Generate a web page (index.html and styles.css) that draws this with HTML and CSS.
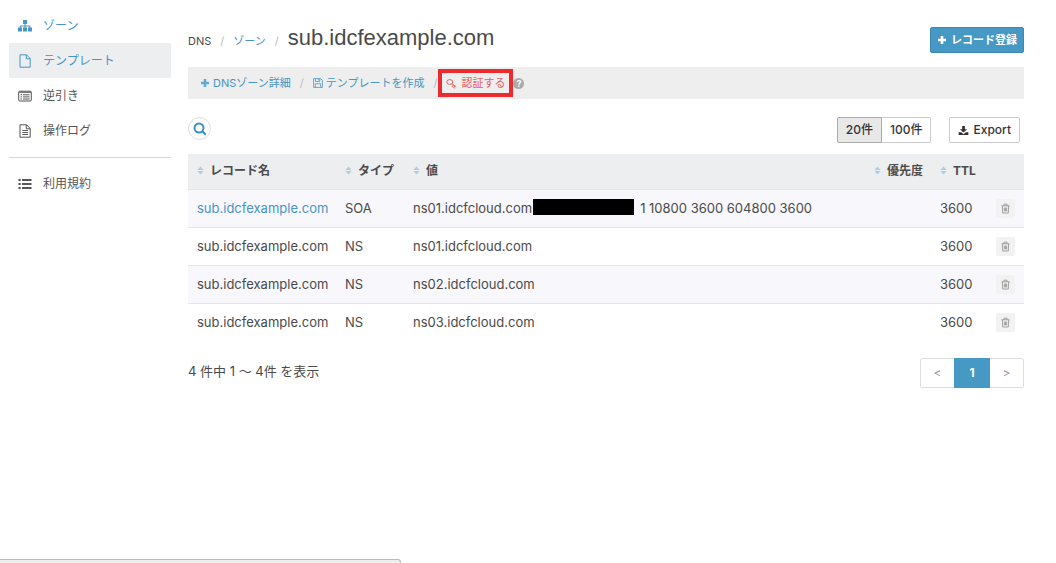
FILE: index.html
```html
<!DOCTYPE html>
<html lang="ja">
<head>
<meta charset="utf-8">
<meta name="viewport" content="width=device-width, initial-scale=1">
<title>sub.idcfexample.com - DNS</title>
<link rel="stylesheet" href="styles.css">
</head>
<body>
<svg class="sprite" aria-hidden="true">
  <symbol id="plus" viewBox="0 0 10 10"><path d="M3.700 1h2.600v2.700H9v2.600H6.300V9H3.700V6.300H1V3.700h2.700z"/></symbol>
  <symbol id="sort" viewBox="0 0 8 10"><path d="M4 0.500 7.500 4.300H0.500zM4 9.500 0.500 5.700h7z"/></symbol>
  <symbol id="trash" viewBox="0 0 10 12"><path d="M0.500 3h9M3.300 3V1.200h3.400V3M1.500 3l.4 8h6.200l.4-8M3.700 5v4.200M5 5v4.200M6.300 5v4.200" fill="none" stroke="currentColor"/></symbol>
</svg>
<div class="layout">
  <nav class="sidebar">
    <ul class="menu">
      <li><a class="menu-link blue" href="#"><svg class="icon" viewBox="0 0 14 14"><path d="M5 1h4v4H7.500v1.600h4.800v2H14v4h-4v-4h1.300v-1H7.500v1H9v4H5v-4h1.500v-1H2.700v1H4v4H0v-4h1.700v-2h4.800V5H5z"/></svg>ゾーン</a></li>
      <li><a class="menu-link blue active" href="#"><svg class="icon line" viewBox="0 0 14 14"><path d="M2 .8h6.500l3.700 3.700v8.700H2zM8.300.8v4h3.900"/></svg>テンプレート</a></li>
      <li><a class="menu-link" href="#"><svg class="icon line" viewBox="0 0 14 14"><rect x=".7" y="2.200" width="12.600" height="9.800" rx="1"/><path d="M1 3.300h12M2.500 5.800H4M5 5.800h6.600M2.500 7.900H4M5 7.900h6.600M2.500 10H4M5 10h6.600"/></svg>逆引き</a></li>
      <li><a class="menu-link" href="#"><svg class="icon line" viewBox="0 0 14 14"><path d="M2 .8h6.500l3.700 3.700v8.700H2zM8.300.8v4h3.900M4.300 6.500h5.600M4.300 8.500h5.600M4.300 10.500h5.600"/></svg>操作ログ</a></li>
    </ul>
    <ul class="menu menu-extra">
      <li><a class="menu-link" href="#"><svg class="icon" viewBox="0 0 14 14"><path d="M.5 2h2.200v2H.5zM4 2h9.500v2H4zM.5 6h2.200v2H.5zM4 6h9.500v2H4zM.5 10h2.200v2H.5zM4 10h9.500v2H4z"/></svg>利用規約</a></li>
    </ul>
  </nav>
  <main class="main">
    <header class="head">
      <div class="crumbs">
        <span>DNS</span><span class="sep">/</span><a href="#">ゾーン</a><span class="sep">/</span><h1 class="title">sub.idcfexample.com</h1>
      </div>
      <button class="btn primary" type="button"><svg class="plus" aria-hidden="true"><use href="#plus"/></svg>レコード登録</button>
    </header>
    <div class="actions">
      <a class="action" href="#"><svg class="plus light" aria-hidden="true"><use href="#plus"/></svg>DNSゾーン詳細</a>
      <span class="slash">/</span>
      <a class="action" href="#"><svg class="save" viewBox="0 0 10 10" aria-hidden="true"><path d="M.6.600h7l1.800 1.800v7H.6zM2.500.8v2.700h4.300V.8M2.300 9.300V5.700h5.400v3.600M5.500 1v1.500"/></svg>テンプレートを作成</a>
      <span class="slash">/</span>
      <a class="action verify" href="#"><svg class="key" viewBox="0 0 11 11" aria-hidden="true"><ellipse cx="3.800" cy="4" rx="3" ry="2.400"/><path d="M6 5.700 10.200 8.800M7.400 6.800 6.300 8.400l1.200 1M9 8l-1.100 1.500 1.300 1"/></svg>認証する</a>
      <button class="help" type="button" aria-label="ヘルプ">?</button>
    </div>
    <div class="tools">
      <button class="search" type="button" aria-label="検索"><svg viewBox="0 0 14 14" aria-hidden="true"><circle cx="6" cy="6" r="4.500"/><path d="m9.300 9.300 3.500 3.500"/></svg></button>
      <div class="group">
        <button class="btn pressed" type="button">20件</button><button class="btn" type="button">100件</button>
      </div>
      <button class="btn export" type="button"><svg viewBox="0 0 12 12" aria-hidden="true"><path d="M4.500 1h3v3.500H10L6 8.200 2 4.500h2.500zM.7 7.800h2.700L6 10l2.600-2.200h2.700V11H.7z"/></svg>Export</button>
    </div>
    <table class="records">
      <colgroup><col class="c-name"><col class="c-type"><col><col class="c-prio"><col class="c-ttl"><col class="c-del"></colgroup>
      <thead>
        <tr>
          <th><svg class="sort"><use href="#sort"/></svg>レコード名</th>
          <th><svg class="sort"><use href="#sort"/></svg>タイプ</th>
          <th><svg class="sort"><use href="#sort"/></svg>値</th>
          <th><svg class="sort"><use href="#sort"/></svg>優先度</th>
          <th><svg class="sort"><use href="#sort"/></svg>TTL</th>
          <th></th>
        </tr>
      </thead>
      <tbody>
        <tr><td><a href="#">sub.idcfexample.com</a></td><td>SOA</td><td>ns01.idcfcloud.com<span class="mask"></span>1 10800 3600 604800 3600</td><td></td><td>3600</td><td><button class="del" type="button" aria-label="削除"><svg><use href="#trash"/></svg></button></td></tr>
        <tr><td>sub.idcfexample.com</td><td>NS</td><td>ns01.idcfcloud.com</td><td></td><td>3600</td><td><button class="del" type="button" aria-label="削除"><svg><use href="#trash"/></svg></button></td></tr>
        <tr><td>sub.idcfexample.com</td><td>NS</td><td>ns02.idcfcloud.com</td><td></td><td>3600</td><td><button class="del" type="button" aria-label="削除"><svg><use href="#trash"/></svg></button></td></tr>
        <tr><td>sub.idcfexample.com</td><td>NS</td><td>ns03.idcfcloud.com</td><td></td><td>3600</td><td><button class="del" type="button" aria-label="削除"><svg><use href="#trash"/></svg></button></td></tr>
      </tbody>
    </table>
    <footer class="foot">
      <p class="count">4 件中 1 〜 4件 を表示</p>
      <div class="pager"><button type="button">&lt;</button><button class="current" type="button">1</button><button type="button">&gt;</button></div>
    </footer>
  </main>
</div>
<div class="status"></div>
</body>
</html>
```
FILE: styles.css
```css
* { box-sizing: border-box; }
body {
  margin: 0;
  background: #fff;
  color: #4a4a4a;
  font: 13px/20px Inter, "Noto Sans CJK JP", sans-serif;
}
button { font: inherit; color: inherit; cursor: pointer; }
a { color: #4795c4; text-decoration: none; }
svg { flex: none; fill: currentColor; }
.sprite { position: absolute; width: 0; height: 0; }

.layout { display: flex; gap: 17px; padding: 8px 32px 0 9px; }
.sidebar { flex: 0 0 162px; }
.menu { list-style: none; margin: 0; padding: 0; }
.menu-extra { margin-top: 9px; padding-top: 8px; border-top: 1px solid #d8d8d8; }
.menu-link {
  display: flex;
  align-items: center;
  gap: 11px;
  height: 35px;
  padding: 0 9px;
  color: #555;
  font-size: 12px;
}
.menu-link.blue { color: #4795c4; }
.menu-link.active { background: #edeeef; }
.icon { width: 14px; height: 14px; }
.line { fill: none; stroke: currentColor; }

.main { flex: 1; min-width: 0; padding-top: 12px; }
.head { display: flex; justify-content: space-between; align-items: center; height: 39px; }
.crumbs { display: flex; align-items: baseline; padding-bottom: 4px; font-size: 11px; }
.sep { margin: 0 9px; color: #bbb; }
.title { margin: 0; font: 22px/30px "Liberation Sans", Arial, sans-serif; }
.btn {
  display: inline-flex;
  align-items: center;
  justify-content: center;
  gap: 4px;
  height: 26px;
  padding: 0 8px;
  border: 1px solid #ccc;
  border-radius: 2px;
  background: #fff;
  color: #333;
  font-size: 12px;
  font-weight: 500;
  line-height: 16px;
}
.primary { border-color: #3a88b6; background: #4799c5; color: #fff; font-size: 11px; font-weight: 700; padding: 0 6px; }
.plus { width: 10px; height: 10px; }
.light { color: #62aacf; }

.actions {
  display: flex;
  align-items: center;
  height: 32px;
  margin-top: 8px;
  padding-left: 12px;
  background: #eee;
  font-size: 11px;
}
.action { display: flex; align-items: center; gap: 3px; }
.slash { width: 22px; text-align: center; color: #bbb; }
.save { width: 10px; height: 10px; fill: none; stroke: currentColor; stroke-width: .8; }
.verify {
  gap: 4px;
  height: 28px;
  margin-left: -8px;
  padding: 0 4px;
  border: 4px solid #ed2b2e;
  background: #eee;
  color: #e8625f;
}
.key { width: 11px; height: 11px; fill: none; stroke: currentColor; }
.help {
  width: 11px;
  height: 11px;
  padding: 0;
  border: 0;
  border-radius: 50%;
  background: #aaa;
  color: #fff;
  font-size: 9px;
  font-weight: 700;
  line-height: 11px;
}

.tools { display: flex; align-items: flex-start; height: 26px; margin-top: 18px; padding-right: 4px; }
.search {
  display: grid;
  place-items: center;
  width: 23px;
  height: 23px;
  margin-right: auto;
  padding: 0;
  border: 1px solid #ddd;
  border-radius: 50%;
  background: #fff;
  color: #3b90c0;
}
.search svg { width: 14px; height: 14px; fill: none; stroke: currentColor; stroke-width: 2; }
.group { display: flex; margin-right: 18px; }
.group .btn { border-radius: 0 2px 2px 0; }
.group .pressed { margin-right: -1px; border-color: #aaa; border-radius: 2px 0 0 2px; background: #e8e8e8; z-index: 1; }
.export svg { width: 11px; height: 11px; }

.records { width: 100%; margin-top: 11px; border-collapse: collapse; table-layout: fixed; }
.c-name { width: 148px; }
.c-type { width: 68px; }
.c-prio { width: 66px; }
.c-ttl { width: 56px; }
.c-del { width: 37px; }
.records th, .records td { padding: 0 9px; text-align: left; white-space: nowrap; }
.records th { height: 35px; background: #edeeef; font-size: 12px; font-weight: 700; }
.records td { height: 38px; border-top: 1px solid #e4e5e8; }
.records tbody tr:nth-child(odd) { background: #f7f7fc; }
.sort { width: 7px; height: 9px; margin-right: 6px; color: #a9cfe0; }
.mask { display: inline-block; width: 101px; height: 16px; margin: 1px 6px 0 1px; background: #000; vertical-align: top; }
.del {
  display: grid;
  place-items: center;
  width: 19px;
  height: 19px;
  padding: 0;
  border: 0;
  border-radius: 2px;
  background: #f2f2f2;
  color: #999;
}
.del svg { width: 9px; height: 11px; }

.foot { display: flex; justify-content: space-between; align-items: flex-start; margin-top: 17px; }
.count { margin: 3px 0 0; }
.pager { display: flex; border: 1px solid #ddd; border-radius: 2px; }
.pager button { width: 33px; height: 28px; padding: 0; border: 0; background: #fff; color: #999; font-size: 12px; }
.pager .current { width: 36px; height: 30px; margin: -1px 0; background: #4799c5; color: #fff; font-weight: 700; }

.status {
  position: fixed;
  left: 0;
  bottom: 0;
  width: 38%;
  height: 4px;
  border: 1px solid #bbb;
  border-bottom: 0;
  border-left: 0;
  border-radius: 0 3px 0 0;
  background: #eee;
}
```
